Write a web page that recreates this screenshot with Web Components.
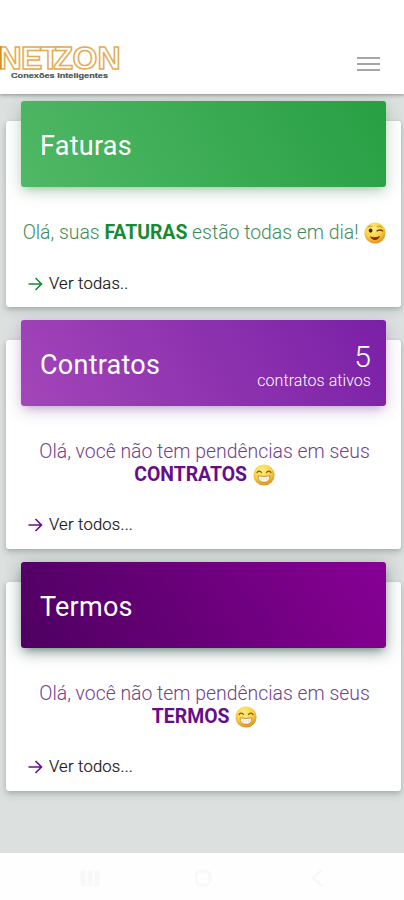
<!DOCTYPE html>
<html lang="pt-BR">
<head>
<meta charset="utf-8">
<meta name="viewport" content="width=device-width, initial-scale=1">
<title>Netzon</title>
<style>
  body {
    margin: 0;
    background: #dce0df;
    font-family: Roboto, "Liberation Sans", sans-serif;
  }
</style>
</head>
<body>
<netzon-app></netzon-app>

<script>
const define = (name, html) => {
  const template = document.createElement("template");
  template.innerHTML = html;
  customElements.define(name, class extends HTMLElement {
    constructor() {
      super();
      this.attachShadow({ mode: "open" });
      this.shadowRoot.appendChild(template.content.cloneNode(true));
    }
  });
};

// ---- brand ----
define("brand-logo", `
<style>
  :host { display: block; }
  svg { display: block; overflow: visible; }
  .name {
    font: 700 32px "Liberation Sans", sans-serif;
    fill: #fffdf8;
    stroke: #e2ac55;
    stroke-width: 1.5;
  }
  .tag { font: 700 7.4px "Liberation Sans", sans-serif; fill: #4c5553; stroke: #4c5553; stroke-width: .2; }
</style>
<svg width="124" height="42" viewBox="0 0 124 42">
  <text class="name" x="-1.5 21 40.5 53.5 72.5 97.5" y="29.5">NETZON</text>
  <path d="M.8 7v23" stroke="#dc8a22" stroke-width="1.6"/>
  <text class="tag" x="11" y="38.8" textLength="97" lengthAdjust="spacingAndGlyphs">Conexões Inteligentes</text>
</svg>
`);

define("top-bar", `
<style>
  :host {
    display: flex;
    justify-content: space-between;
    align-items: flex-start;
    box-sizing: border-box;
    height: 94px;
    padding: 39px 24px 0 0;
    background: #fff;
    box-shadow: 0 1px 4px rgba(0, 0, 0, .38);
  }
  button {
    display: flex;
    flex-direction: column;
    gap: 4px;
    margin: 18px 0 0;
    padding: 0;
    border: 0;
    background: none;
  }
  i { width: 23px; height: 2px; background: #a3a7a7; }
</style>
<brand-logo></brand-logo>
<button aria-label="Menu"><i></i><i></i><i></i></button>
`);

// ---- emoji ----
const face = (id, features) => `
<style>
  :host { display: inline-block; width: 22px; height: 22px; margin-left: 1px; vertical-align: -5px; }
  svg { display: block; }
</style>
<svg width="22" height="22" viewBox="0 0 22 22">
  <defs>
    <radialGradient id="${id}" cx=".42" cy=".3" r=".72">
      <stop offset="0" stop-color="#fff07c"/>
      <stop offset=".6" stop-color="#f8ce43"/>
      <stop offset="1" stop-color="#db8c1c"/>
    </radialGradient>
  </defs>
  <circle cx="11" cy="11" r="10.6" fill="url(#${id})"/>
  ${features}
</svg>`;

define("wink-face", face("wink", `
  <ellipse cx="6.6" cy="8.6" rx="1.9" ry="2.1" fill="#40270d"/>
  <path d="M3.7 5.4Q6 3.2 8.4 4.5M12.8 4.6Q15.6 3 18 5.6" fill="none" stroke="#b6771e" stroke-width=".8"/>
  <path d="M12.6 9.3Q15.5 6.7 19 9.2" fill="none" stroke="#68400f" stroke-width="1.4"/>
  <path d="M6 14.2Q11 16.6 16 13.7Q14.6 18 11 18Q7.5 18 6 14.2Z" fill="#8b2b13"/>
`));

define("grin-face", face("grin", `
  <path d="M3.8 8.8Q6.2 5.3 8.8 8.8M13.2 8.8Q15.8 5.3 18.2 8.8" fill="none" stroke="#805311" stroke-width="1.3"/>
  <path d="M5.2 11.8Q11 13.3 16.8 11.8Q17.1 18.3 11 18.3Q4.9 18.3 5.2 11.8Z" fill="#fffdf2" stroke="#b48235" stroke-width=".8"/>
  <path d="M5.5 15H16.5M8.5 12.8V17.6M11 12.9V18M13.5 12.8V17.6" stroke="#ddd3b9" stroke-width=".5"/>
`));

// ---- cards ----
define("summary-card", `
<style>
  :host {
    display: block;
    box-sizing: border-box;
    height: var(--height, 209px);
    padding: 0 15px;
    border-radius: 3px;
    background: #fff;
    box-shadow: 0 2px 5px rgba(65, 85, 80, .3), 0 5px 9px rgba(65, 85, 80, .1);
  }
  header {
    display: flex;
    justify-content: space-between;
    align-items: center;
    box-sizing: border-box;
    height: 86px;
    margin: 0 0 -20px;
    padding: 4px 15px 0 19px;
    border-radius: 3px;
    background: linear-gradient(60deg, var(--from), var(--to));
    box-shadow: 0 4px 16px var(--glow), 0 5px 8px -4px var(--glow);
    color: #fff;
    transform: translateY(-20px);
  }
  h2 { margin: 0; font-size: 27px; font-weight: 400; line-height: 32px; letter-spacing: .25px; }
  .message {
    margin: 35px -11px 0 -9px;
    color: var(--ink);
    font-size: 19.4px;
    font-weight: 300;
    line-height: 22.5px;
    text-align: center;
    white-space: nowrap;
  }
  footer {
    display: flex;
    align-items: center;
    gap: 6px;
    margin: 28px 0 0 7px;
    color: #111;
    font-size: 16.6px;
    font-weight: 300;
    line-height: 22px;
    letter-spacing: .22px;
    -webkit-text-stroke: .2px #222;
  }
  svg { color: var(--accent); }
</style>
<header>
  <h2><slot name="title"></slot></h2>
  <slot name="stat"></slot>
</header>
<div class="message"><slot></slot></div>
<footer>
  <svg width="15" height="16" viewBox="0 0 15 16" fill="none" stroke="currentColor" stroke-width="1.6"><path d="M.5 8H13.5M7.5 2L13.5 8L7.5 14"/></svg>
  <slot name="link"></slot>
</footer>
`);

define("card-stat", `
<style>
  :host { display: flex; flex-direction: column; align-items: flex-end; font-weight: 300; }
  .value { font-size: 30px; line-height: 30px; }
  .label { font-size: 16px; line-height: 17px; letter-spacing: .06px; }
</style>
<span class="value"><slot name="value"></slot></span>
<span class="label"><slot></slot></span>
`);

// ---- system navigation ----
define("system-nav", `
<style>
  :host {
    display: flex;
    justify-content: space-between;
    align-items: center;
    box-sizing: border-box;
    height: 47px;
    padding: 2px 79px 0 80px;
    background: #fefefe;
  }
  svg { fill: none; stroke: #f8f8f8; stroke-width: 3; }
</style>
<svg width="20" height="18" viewBox="0 0 20 18"><path d="M3 1V17M10 1V17M17 1V17" stroke-width="5"/></svg>
<svg width="20" height="20" viewBox="0 0 20 20"><rect x="1" y="3" width="14" height="14" rx="5"/></svg>
<svg width="16" height="20" viewBox="0 0 16 20"><path d="M13 2L4 10L13 18"/></svg>
`);

define("netzon-app", `
<style>
  :host { display: flex; flex-direction: column; height: 900px; overflow: hidden; }
  main {
    display: flex;
    flex: 1;
    flex-direction: column;
    gap: 33px;
    padding: 27px 3px 0 6px;
  }
  strong { font-weight: 700; color: var(--accent); }
  .invoices {
    --height: 186px;
    --from: #50b866; --to: #289f43;
    --ink: #3d8b5a; --accent: #168c32;
    --glow: rgba(40, 120, 60, .28);
  }
  .contracts {
    --from: #a346b9; --to: #7a20a6;
    --ink: #704288; --accent: #670c8a;
    --glow: rgba(110, 40, 140, .26);
  }
  .terms {
    --from: #4e0061; --to: #880095;
    --ink: #704288; --accent: #670c8a;
    --glow: rgba(20, 60, 45, .42);
  }
</style>
<top-bar></top-bar>
<main>
  <summary-card class="invoices">
    <span slot="title">Faturas</span>
    Olá, suas <strong>FATURAS</strong> estão todas em dia! <wink-face></wink-face>
    <span slot="link">Ver todas..</span>
  </summary-card>
  <summary-card class="contracts">
    <span slot="title">Contratos</span>
    <card-stat slot="stat"><span slot="value">5</span>contratos ativos</card-stat>
    Olá, você não tem pendências em seus<br><strong>CONTRATOS</strong> <grin-face></grin-face>
    <span slot="link">Ver todos...</span>
  </summary-card>
  <summary-card class="terms">
    <span slot="title">Termos</span>
    Olá, você não tem pendências em seus<br><strong>TERMOS</strong> <grin-face></grin-face>
    <span slot="link">Ver todos...</span>
  </summary-card>
</main>
<system-nav></system-nav>
`);
</script>
</body>
</html>
